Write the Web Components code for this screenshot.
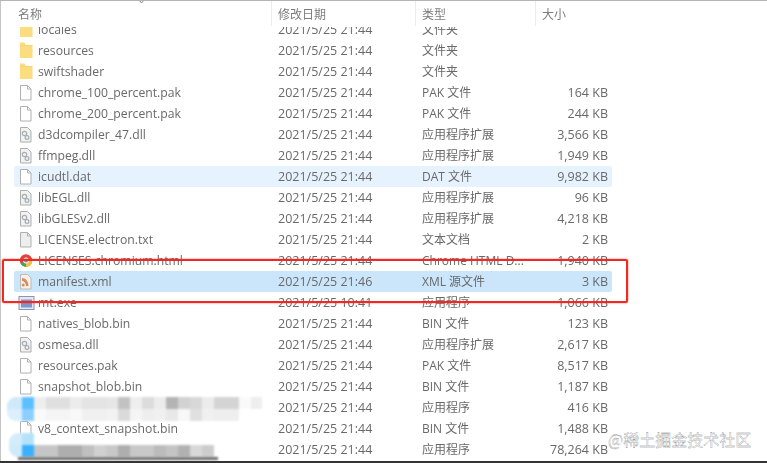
<!DOCTYPE html>
<html><head><meta charset="utf-8"><style>
html,body{margin:0;padding:0;background:#fff;width:767px;height:463px;overflow:hidden}
body{font-family:"Open Sans","Noto Sans CJK SC",sans-serif}
</style></head><body>
<file-window>
<col-head slot="head"></col-head>
</file-window>
<template id="win"><style>
:host{display:block;position:relative;width:767px;height:463px;overflow:hidden;box-sizing:border-box;border-top:1px solid #b5b5b5;background:#fff;color:#696969;font-family:"Open Sans","Noto Sans CJK SC",sans-serif}
.inner{display:flex;flex-direction:column;height:460px;border-left:1px solid #c4c4c4}
.list{flex:1;overflow:hidden;filter:blur(.6px)}
.rows{margin-top:-8px;display:block}
.foot{height:2px;background:#333}
.red{position:absolute;left:2px;top:258px;width:622px;height:40px;border:2px solid #f02a22;border-radius:2px;box-shadow:0 0 1.5px #f02a22}
.mark{position:absolute;left:608px;top:427px;font:16px/22px "Noto Sans CJK SC",sans-serif;color:#fff;-webkit-text-stroke:.3px #808080;white-space:nowrap}
.shade{position:absolute;left:18px;top:456px;width:200px;height:3px;background:#6a6a6a;filter:blur(1px)}
mosaic-bar{position:absolute}
</style><div class="inner"><slot name="head"></slot><div class="list"><div class="rows" id="rows"></div></div></div><div class="foot"></div><mosaic-bar id="m1" style="left:7px;top:396px"></mosaic-bar><mosaic-bar id="m2" style="left:9px;top:432px"></mosaic-bar><div class="shade"></div><div class="red"></div><div class="mark">@稀土掘金技术社区</div></template>
<template id="headt"><style>
:host{display:grid;grid-template-columns:271px 144px 120px 1fr;height:25px;flex:none;font:12px/25px "Noto Sans CJK SC",sans-serif;color:#7d7d7d;filter:blur(.55px);position:relative;background:#fff;z-index:1;padding-bottom:1px}
.c{padding-left:6px;border-right:1px solid #ececec;box-sizing:border-box}
.c.first{padding-left:17px}
.c.last{border:0}
svg{position:absolute;left:137px;top:-3px;width:7px;height:7px}
</style><div class="c first">名称</div><div class="c">修改日期</div><div class="c">类型</div><div class="c last">大小</div><svg viewBox="0 0 7 7"><path d="M0 1 L3.500 5 L7 1" fill="none" stroke="#888" stroke-width="1"/></svg></template>
<template id="rowt"><style>
:host{display:grid;grid-template-columns:24px 240px 144px 120px 66px;height:21px;margin-left:13px;width:598px;align-items:center;font-size:12.5px;line-height:21px;white-space:nowrap;background:var(--bg,transparent);border-radius:2px}
svg{width:14px;height:18px;margin-left:5px;display:block;overflow:visible}
.n{font-size:12.2px}
.t{font:12px/21px "Open Sans","Noto Sans CJK SC",sans-serif}
.s{text-align:right}
.cell{overflow:hidden}
</style><span id="i"></span><span class="cell n" id="n"></span><span class="cell d" id="d"></span><span class="cell t" id="t"></span><span class="cell s" id="s"></span></template>
<script>
const PAGE='M1.500 1.500h7l3.500 3.500v11h-10.500z';
const ICONS={
folder:'<path d="M1 0.500h4.500l1 2.500h7v13h-12.500z" fill="#fbdc7e"/><path d="M1 3h12.500v1h-12.500z" fill="#f5cd63" opacity=".6"/>',
file:'<path d="'+PAGE+'" fill="#fff" stroke="#b0b0b0"/><path d="M8.500 1.500v3.500h3.500" fill="none" stroke="#b0b0b0"/>',
dll:'<path d="'+PAGE+'" fill="#f2f2f2" stroke="#adadad"/><circle cx="5.500" cy="7.500" r="2.200" fill="none" stroke="#a4aeb3" stroke-width="1.200"/><circle cx="8" cy="11.500" r="1.900" fill="none" stroke="#a4aeb3" stroke-width="1.200"/>',
txt:'<path d="'+PAGE+'" fill="#eeeeee" stroke="#b0b0b0"/><path d="M8.500 1.500v3.500h3.500" fill="none" stroke="#b0b0b0"/>',
chrome:'<circle cx="7" cy="8.500" r="6.200" fill="#e0453a"/><path d="M7 8.500L1.600 11.600A6.200 6.200 0 0 0 7 14.700z" fill="#3fa95b"/><path d="M7 8.500L7 14.700A6.200 6.200 0 0 0 13.200 8.500z" fill="#f2c530"/><circle cx="7" cy="8.500" r="2.600" fill="#5b93ee" stroke="#fff"/>',
xml:'<path d="'+PAGE+'" fill="#f4f0ea" stroke="#b5b0a8" stroke-width=".8"/><path d="M3 5c3.500 0 6.500 3 6.500 8H7C7 10 5 8 3 8z" fill="#d98c5c"/><circle cx="4.200" cy="12" r="1.500" fill="#d98c5c"/>',
exe:'<rect x="0" y="2.500" width="15" height="13" fill="#e4e8f0" stroke="#8a96ab"/><rect x="2" y="5.500" width="11" height="8" fill="#7d97cc"/>',
none:''};
const R=[
['folder','locales','2021/5/25 21:44','文件夹',''],
['folder','resources','2021/5/25 21:44','文件夹',''],
['folder','swiftshader','2021/5/25 21:44','文件夹',''],
['file','chrome_100_percent.pak','2021/5/25 21:44','PAK 文件','164 KB'],
['file','chrome_200_percent.pak','2021/5/25 21:44','PAK 文件','244 KB'],
['dll','d3dcompiler_47.dll','2021/5/25 21:44','应用程序扩展','3,566 KB'],
['dll','ffmpeg.dll','2021/5/25 21:44','应用程序扩展','1,949 KB'],
['file','icudtl.dat','2021/5/25 21:44','DAT 文件','9,982 KB','#e6f3fe'],
['dll','libEGL.dll','2021/5/25 21:44','应用程序扩展','96 KB'],
['dll','libGLESv2.dll','2021/5/25 21:44','应用程序扩展','4,218 KB'],
['txt','LICENSE.electron.txt','2021/5/25 21:44','文本文档','2 KB'],
['chrome','LICENSES.chromium.html','2021/5/25 21:44','Chrome HTML D...','1,940 KB'],
['xml','manifest.xml','2021/5/25 21:46','XML 源文件','3 KB','#cbe6fb'],
['exe','mt.exe','2021/5/25 10:41','应用程序','1,066 KB'],
['file','natives_blob.bin','2021/5/25 21:44','BIN 文件','123 KB'],
['dll','osmesa.dll','2021/5/25 21:44','应用程序扩展','2,617 KB'],
['file','resources.pak','2021/5/25 21:44','PAK 文件','8,517 KB'],
['file','snapshot_blob.bin','2021/5/25 21:44','BIN 文件','1,187 KB'],
['none','','2021/5/25 21:44','应用程序','416 KB'],
['file','v8_context_snapshot.bin','2021/5/25 21:44','BIN 文件','1,488 KB'],
['none','','2021/5/25 21:44','应用程序','78,264 KB']];
const M1=[
[[15,'#cfe9fb'],[12,'#5cc0ff'],[12,'#eeeeee'],[24,'#dfdfdf'],[12,'#ececec'],[24,'#e4e4e4'],[12,'#e6e6e6'],[12,'#c2c2c2'],[12,'#eeeeee'],[12,'#dcdcdc'],[12,'#ececec'],[12,'#b4b4b4'],[12,'#d2d2d2'],[12,'#d8d8d8'],[12,'#ececec'],[25,'#d4d4d4'],[12,'#fafafa'],[11,'#eeeeee']],
[[15,'#dbeffc'],[12,'#8ccfff'],[12,'#fafafa'],[24,'#f5f5f5'],[12,'#f8f8f8'],[24,'#f0f0f0'],[12,'#f2f2f2'],[12,'#dadada'],[12,'#f5f5f5'],[12,'#eeeeee'],[12,'#f0f0f0'],[12,'#e8e8e8'],[12,'#f8f8f8'],[12,'#e0e0e0'],[12,'#f0f0f0'],[25,'#eeeeee'],[12,'#ffffff'],[11,'#ffffff']]];
const M2=[
[[13,'#d4ecfb'],[12,'#b5e2f8'],[180,'transparent']],
[[13,'#cfeafb'],[12,'#3ab0ff'],[24,'#c6c6c6'],[24,'#aeaeae'],[12,'#c0c0c0'],[12,'#d0d0d0'],[12,'#c8c8c8'],[12,'#aeaeae'],[24,'#c8c8c8'],[12,'#bbbbbb'],[12,'#c4c4c4'],[12,'#b2b2b2'],[12,'#d8d8d8'],[12,'#cccccc']]];
class FileRow extends HTMLElement{
 constructor(){super();this.attachShadow({mode:'open'}).append(document.getElementById('rowt').content.cloneNode(true));}
 set data(r){const $=i=>this.shadowRoot.getElementById(i);
  if(r[0]!=='none')$('i').innerHTML='<svg viewBox="0 0 14 18">'+ICONS[r[0]]+'</svg>';
  $('n').textContent=r[1];$('d').textContent=r[2];$('t').textContent=r[3];$('s').textContent=r[4];
  if(r[5])this.style.setProperty('--bg',r[5]);
 }
}
class MosaicBar extends HTMLElement{
 constructor(){super();this.attachShadow({mode:'open'}).innerHTML='<style>:host{display:flex;flex-direction:column;filter:blur(.8px);border-radius:9px 0 0 9px;overflow:hidden}.r{display:flex;height:12px}.r i{display:block;height:12px}</style>';}
 set cells(m){m.forEach(row=>{const d=document.createElement('div');d.className='r';row.forEach(([w,c])=>{const i=document.createElement('i');i.style.width=w+'px';i.style.background=c;d.append(i);});this.shadowRoot.append(d);});}
}
class ColHead extends HTMLElement{constructor(){super();this.attachShadow({mode:'open'}).append(document.getElementById('headt').content.cloneNode(true));}}
class FileWindow extends HTMLElement{
 constructor(){super();const s=this.attachShadow({mode:'open'});s.append(document.getElementById('win').content.cloneNode(true));
  const box=s.getElementById('rows');R.forEach(r=>{const e=document.createElement('file-row');box.append(e);e.data=r;});
  s.getElementById('m1').cells=M1;s.getElementById('m2').cells=M2;}
}
customElements.define('file-row',FileRow);customElements.define('mosaic-bar',MosaicBar);customElements.define('col-head',ColHead);customElements.define('file-window',FileWindow);
</script></body></html>
